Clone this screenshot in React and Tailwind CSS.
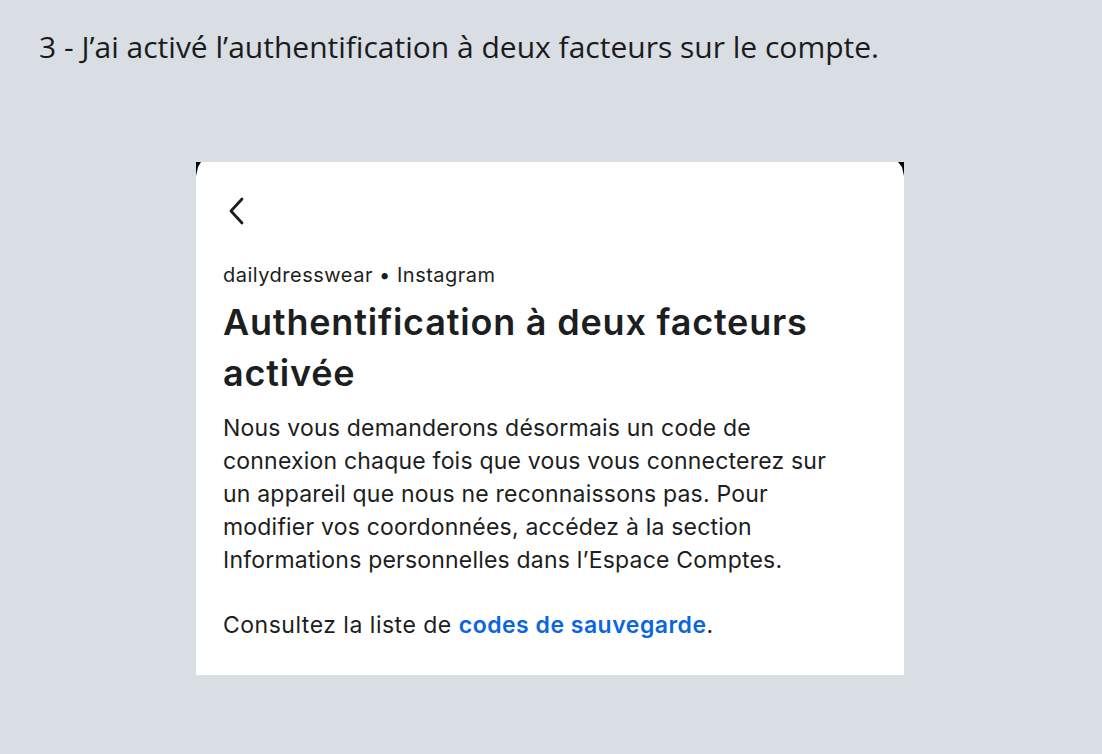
import React from 'react';

const Corner = ({ side }) => (
    <svg
        width="6"
        height="16"
        viewBox="0 0 6 16"
        className={`absolute top-0 ${side === 'left' ? 'left-0' : 'right-0'}`}
    >
        {side === 'left' ? (
            <path d="M0 0 H5 L2 5 L0 14 Z" fill="#000" />
        ) : (
            <path d="M6 0 H0 L4 5 L6 14 Z" fill="#000" />
        )}
    </svg>
);

const App = () => {
    return (
        <div className="min-h-[754px] w-full bg-[#d9dde4] pt-[27px]" style={{ fontFamily: '"Open Sans", sans-serif' }}>
            <p className="pl-[39px] text-[30px] leading-[40px] text-[#1b1b1b]">
                3 - J’ai activé l’authentification à deux facteurs sur le compte.
            </p>

            <div className="ml-[196px] mt-[95px] w-[708px] h-[513px] bg-white relative px-[27px] pt-[35px] text-[#1c1e21]" style={{ fontFamily: 'Inter, "Noto Sans", sans-serif' }}>
                <Corner side="left" />
                <Corner side="right" />

                {/* back arrow */}
                <svg width="22" height="28" viewBox="0 0 22 28" className="ml-[3px]">
                    <path d="M16 2 L5 14 L16 26" fill="none" stroke="#1c1e21" strokeWidth="2.8" strokeLinecap="round" strokeLinejoin="round" />
                </svg>

                <p className="mt-[37px] text-[20px] leading-[26px] tracking-[0.5px]">dailydresswear • Instagram</p>

                <h1 className="mt-[9px] text-[36px] leading-[51px] font-semibold tracking-[0.8px] w-[640px]">
                    Authentification à deux facteurs activée
                </h1>

                <p className="mt-[13px] text-[23px] leading-[33px] tracking-[0.2px] w-[628px]">
                    Nous vous demanderons désormais un code de connexion chaque fois que vous vous connecterez sur un appareil que nous ne reconnaissons pas. Pour modifier vos coordonnées, accédez à la section Informations personnelles dans l’Espace Comptes.
                </p>

                <p className="mt-[32px] text-[23px] leading-[33px] tracking-[0.5px]">
                    Consultez la liste de <span className="font-semibold text-[#0a66e0]">codes de sauvegarde</span>.
                </p>
            </div>
        </div>
    );
};

export default App;
